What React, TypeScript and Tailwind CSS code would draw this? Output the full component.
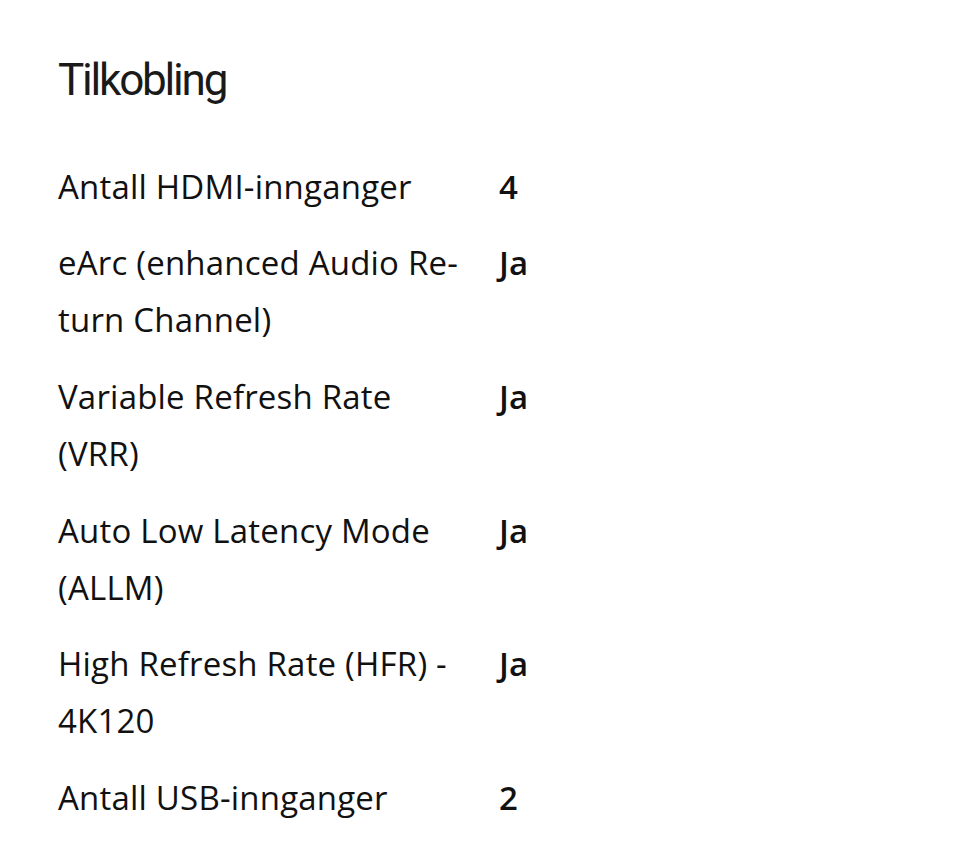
const rows: { label: string; value: string }[] = [
    { label: 'Antall HDMI-innganger', value: '4' },
    { label: 'eArc (enhanced Audio Re\u00ADturn Channel)', value: 'Ja' },
    { label: 'Variable Refresh Rate (VRR)', value: 'Ja' },
    { label: 'Auto Low Latency Mode (ALLM)', value: 'Ja' },
    { label: 'High Refresh Rate (HFR) - 4K120', value: 'Ja' },
    { label: 'Antall USB-innganger', value: '2' },
];

export default function App() {
    return (
        <div className="min-h-[866px] w-[960px] bg-white px-[58px] pt-[52px] text-[#111]">
            <h2 className="font-['Roboto',sans-serif] text-[44px] leading-[56px] tracking-[-2.2px] text-[#1a1a1a]">
                Tilkobling
            </h2>
            <div className="mt-[40px] font-['Open_Sans',sans-serif] text-[33px] leading-[57px] tracking-[0.2px]">
                {rows.map((row) => (
                    <div
                        key={row.label}
                        className="grid grid-cols-[441px_1fr] py-[9.8px]"
                    >
                        <div className="pr-[26px]">{row.label}</div>
                        <div className="font-semibold tracking-normal">
                            {row.value}
                        </div>
                    </div>
                ))}
            </div>
        </div>
    );
}
